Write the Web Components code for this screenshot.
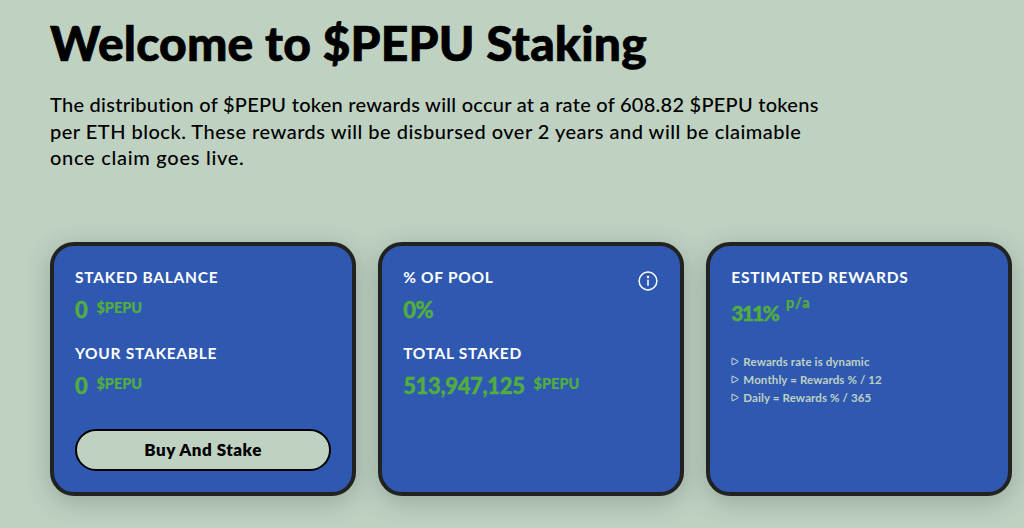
<!DOCTYPE html>
<html lang="en">
<head>
<meta charset="utf-8">
<title>$PEPU Staking</title>
<style>
  html, body { margin: 0; height: 100%; overflow: hidden; background: #bfd1c1; }
  body { font-family: "Lato", "Liberation Sans", sans-serif; }
</style>
</head>
<body>
<staking-page>
  <span slot="title">Welcome to $PEPU Staking</span>
  <span slot="intro"><span style="letter-spacing:.26px">The distribution of $PEPU token rewards will occur at a rate of 608.82 $PEPU tokens</span><br><span style="letter-spacing:.49px">per ETH block. These rewards will be disbursed over 2 years and will be claimable</span><br><span style="letter-spacing:.72px">once claim goes live.</span></span>

  <stat-card>
    <stat-row label="Staked Balance" value="0" unit="$PEPU"></stat-row>
    <stat-row label="Your Stakeable" value="0" unit="$PEPU"></stat-row>
    <pill-button slot="footer">Buy And Stake</pill-button>
  </stat-card>

  <stat-card info>
    <stat-row label="% of Pool" value="0%"></stat-row>
    <stat-row label="Total Staked" value="513,947,125" unit="$PEPU"></stat-row>
  </stat-card>

  <stat-card>
    <stat-row label="Estimated Rewards" value="311%" unit="p/a" raised></stat-row>
    <note-list>
      <note-item>Rewards rate is dynamic</note-item>
      <note-item>Monthly = Rewards % / 12</note-item>
      <note-item>Daily = Rewards % / 365</note-item>
    </note-list>
  </stat-card>
</staking-page>

<script>
class StakingPage extends HTMLElement {
  constructor() {
    super();
    this.attachShadow({ mode: "open" });
    this.shadowRoot.innerHTML = `
      <style>
        :host { display: block; padding: 17px 11.5px 0 50px; color: #000; }
        h1 { margin: 0; font-size: 48px; line-height: 52px; font-weight: 900; letter-spacing: 0.16px; -webkit-text-stroke: 0.7px #000; }
        p { margin: 22px 0 0; font-size: 20px; line-height: 26.5px; font-weight: 500; white-space: nowrap; }
        .cards { display: grid; grid-template-columns: repeat(3, 1fr); gap: 22px; margin-top: 71px; }
      </style>
      <h1><slot name="title"></slot></h1>
      <p><slot name="intro"></slot></p>
      <div class="cards"><slot></slot></div>
    `;
  }
}

class StatCard extends HTMLElement {
  constructor() {
    super();
    this.attachShadow({ mode: "open" });
    this.shadowRoot.innerHTML = `
      <style>
        :host {
          display: flex;
          flex-direction: column;
          position: relative;
          box-sizing: border-box;
          height: 254px;
          padding: 21px;
          background: #2f59b1;
          border: 4px solid #222;
          border-radius: 24px;
          box-shadow: 0 6px 26px rgba(40, 70, 60, 0.28);
        }
        .body { display: grid; gap: 18px; }
        .foot { margin-top: auto; }
        svg { position: absolute; top: 25px; right: 22px; width: 20px; height: 20px; display: none; }
        :host([info]) svg { display: block; }
      </style>
      <svg viewBox="0 0 20 20" fill="none" stroke="#fff" stroke-width="1.5" stroke-linecap="round">
        <circle cx="10" cy="10" r="8.9"/>
        <path d="M10 9.2v5"/>
        <circle cx="10" cy="5.9" r="0.5" fill="#fff"/>
      </svg>
      <div class="body"><slot></slot></div>
      <div class="foot"><slot name="footer"></slot></div>
    `;
  }
}

class StatRow extends HTMLElement {
  constructor() {
    super();
    this.attachShadow({ mode: "open" });
  }

  connectedCallback() {
    const unit = this.getAttribute("unit");
    this.shadowRoot.innerHTML = `
      <style>
        :host { display: block; }
        .label { font-size: 15.5px; line-height: 20px; font-weight: 700; color: #fff; letter-spacing: 0.72px; text-transform: uppercase; }
        .value { display: flex; align-items: flex-start; gap: 9px; margin-top: 10px; color: #52ad3f; font-weight: 900; }
        .num { font-size: 22px; line-height: 26px; margin-bottom: 2px; letter-spacing: -0.35px; -webkit-text-stroke: 0.4px #52ad3f; }
        .unit { font-size: 14.5px; line-height: 20px; margin-top: 1px; -webkit-text-stroke: 0.2px #52ad3f; }
        :host([raised]) .value { margin-top: 13px; gap: 8px; }
        :host([raised]) .num { font-size: 21px; letter-spacing: -1.8px; }
        :host([raised]) .unit { margin-top: -7px; letter-spacing: 1px; }
      </style>
      <div class="label">${this.getAttribute("label")}</div>
      <div class="value">
        <span class="num">${this.getAttribute("value")}</span>
        ${unit ? `<span class="unit">${unit}</span>` : ""}
      </div>
    `;
  }
}

class PillButton extends HTMLElement {
  constructor() {
    super();
    this.attachShadow({ mode: "open" });
    this.shadowRoot.innerHTML = `
      <style>
        :host {
          display: flex; align-items: center; justify-content: center;
          box-sizing: border-box; height: 42px;
          background: #bfd1c1; color: #000;
          border: 2px solid #000; border-radius: 21px;
          font-size: 17px; font-weight: 800; letter-spacing: 0.5px;
        }
      </style>
      <slot></slot>
    `;
  }
}

class NoteList extends HTMLElement {
  constructor() {
    super();
    this.attachShadow({ mode: "open" });
    this.shadowRoot.innerHTML = `
      <style>
        :host { display: grid; margin-top: 7px; color: #bfd1c1; font-size: 11.5px; font-weight: 700; line-height: 18px; letter-spacing: 0.12px; }
      </style>
      <slot></slot>
    `;
  }
}

class NoteItem extends HTMLElement {
  constructor() {
    super();
    this.attachShadow({ mode: "open" });
    this.shadowRoot.innerHTML = `
      <style>
        :host { display: flex; align-items: center; gap: 4px; }
        svg { width: 8px; height: 9px; flex: none; margin-top: -1px; }
      </style>
      <svg viewBox="0 0 8 9" fill="none" stroke="#d5e2d6" stroke-width="1" stroke-linejoin="round">
        <path d="M1.2 1.2 Q1 1 1.5 1.2 L6.8 3.9 Q7.4 4.5 6.8 5.1 L1.5 7.8 Q1 8 1.2 7.8 Q.6 4.5 1.2 1.2Z"/>
      </svg>
      <span><slot></slot></span>
    `;
  }
}

customElements.define("staking-page", StakingPage);
customElements.define("stat-card", StatCard);
customElements.define("stat-row", StatRow);
customElements.define("pill-button", PillButton);
customElements.define("note-list", NoteList);
customElements.define("note-item", NoteItem);
</script>
</body>
</html>
